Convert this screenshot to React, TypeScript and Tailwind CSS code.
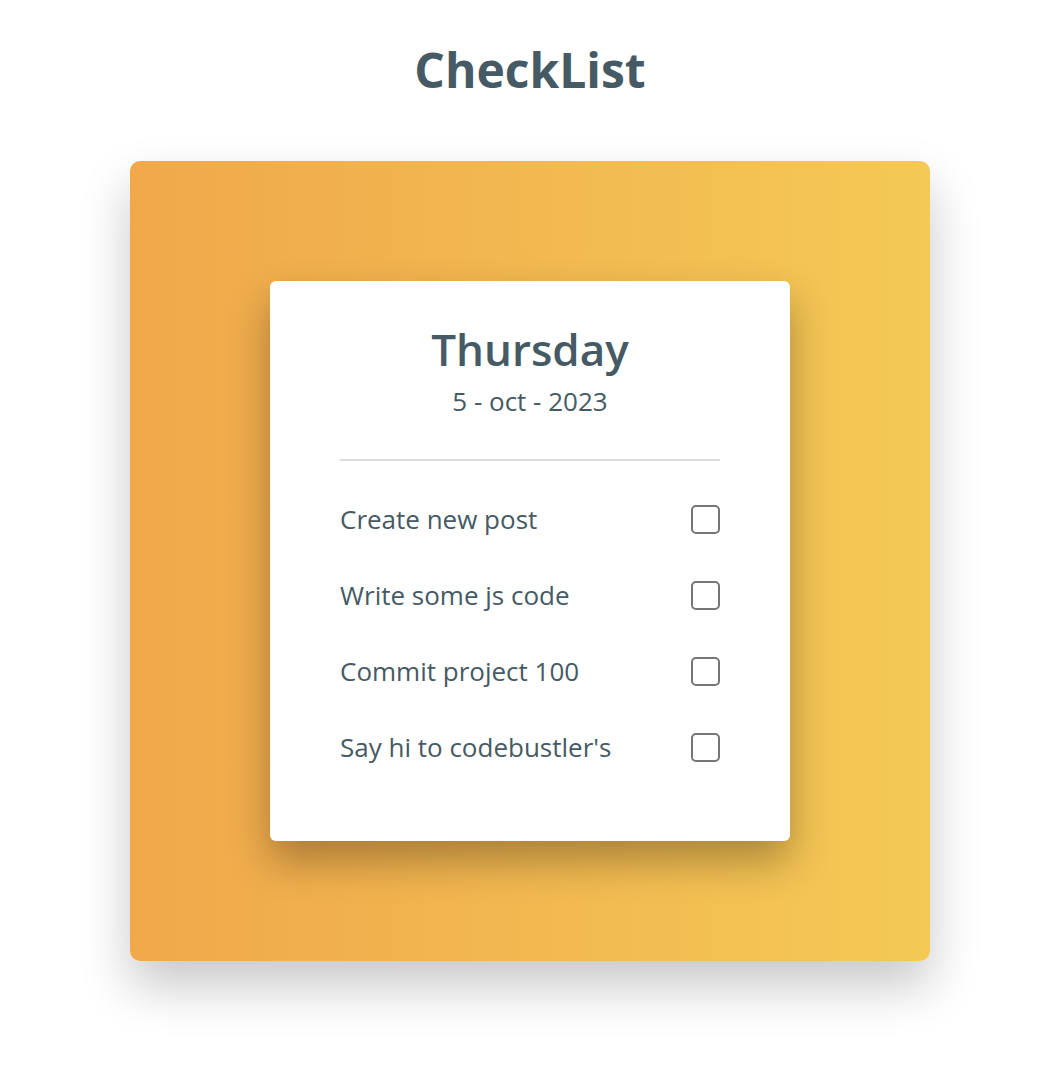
import React from "react";

const items = ["Create new post", "Write some js code", "Commit project 100", "Say hi to codebustler's"];

export default function App() {
  return (
    <div className="min-h-[1088px] w-full bg-white flex flex-col items-center pl-[10px]" style={{ fontFamily: '"Open Sans", "Noto Sans", sans-serif' }}>
      <h1 className="mt-[40px] text-[48px] leading-[60px] font-bold text-[#455a64]">CheckList</h1>
      <div className="mt-[61px] w-[800px] h-[800px] rounded-[10px] bg-gradient-to-r from-[#f0a84b] to-[#f4c955] shadow-[0_25px_50px_rgba(0,0,0,0.22)] flex items-center justify-center">
        <div className="w-[520px] h-[560px] bg-white rounded-[6px] shadow-[0_20px_40px_rgba(0,0,0,0.3)] px-[70px] pt-[38px]">
          <div className="text-center text-[44px] leading-[60px] font-semibold text-[#455a64]">Thursday</div>
          <div className="mt-[4px] text-center text-[26px] leading-[36px] text-[#455a64]">5 - oct - 2023</div>
          <div className="mt-[40px] h-[2px] bg-[#dcdcdc]" />
          <div className="mt-[42px] flex flex-col gap-[44px]">
            {items.map((t) => (
              <div key={t} className="flex items-center justify-between h-[32px]">
                <span className="text-[26px] leading-[32px] text-[#455a64]">{t}</span>
                <span className="w-[29px] h-[29px] border-2 border-[#767676] rounded-[5px]" />
              </div>
            ))}
          </div>
        </div>
      </div>
    </div>
  );
}
